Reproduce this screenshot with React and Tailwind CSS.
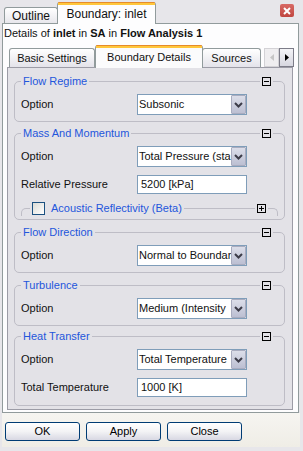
import React from 'react';

const PANEL = 'bg-[#e3e2e7]';

const BoxIcon = ({ plus }) => (
  <svg width="9" height="9" viewBox="0 0 9 9" className="block">
    <rect x="0.5" y="0.5" width="8" height="8" fill="none" stroke="#000" />
    <path d="M2 4.5h5" stroke="#000" />
    {plus && <path d="M4.5 2v5" stroke="#000" />}
  </svg>
);

const Chevron = () => (
  <svg width="9" height="6" viewBox="0 0 9 6" className="block">
    <path d="M1 1l3.5 3.5L8 1" fill="none" stroke="#3c3c48" strokeWidth="2" />
  </svg>
);

const Select = ({ value }) => (
  <div className="w-[110px] h-[21px] border border-[#7f9db9] bg-white flex">
    <div className="flex-1 overflow-hidden whitespace-nowrap pl-[1px] leading-[19px]">{value}</div>
    <div className="w-[15px] h-full border border-[#a9acbf] rounded-[1px] bg-gradient-to-b from-[#dcdee9] to-[#bcbfd2] flex items-center justify-center">
      <Chevron />
    </div>
  </div>
);

const TextField = ({ value }) => (
  <div className="w-[110px] h-[19px] border border-[#7f9db9] bg-white pl-[3px] leading-[17px] whitespace-nowrap">
    {value}
  </div>
);

const Row = ({ label, children, className = '' }) => (
  <div className={`flex items-center ${className}`}>
    <div className="w-[116px]">{label}</div>
    {children}
  </div>
);

const Group = ({ title, className = '', bodyClass = '', children }) => (
  <div className={`border border-[#bebdc6] rounded-[5px] ${className}`}>
    <div className="flex items-center h-[13px] -mt-[7px] pl-[6px] pr-[11px]">
      <span className={`${PANEL} px-[2px] leading-[13px] text-[#2356dc]`}>{title}</span>
      <span className="flex-1" />
      <span className={`${PANEL} px-[2px]`}>
        <BoxIcon />
      </span>
    </div>
    <div className={`px-[6px] pt-[6px] ${bodyClass}`}>{children}</div>
  </div>
);

const SubTab = ({ label, active, className = '' }) =>
  active ? (
    <div className={`relative z-10 -mb-[1px] h-[23px] border-x border-[#919b9c] rounded-t-[3px] bg-[#fbfbfc] flex flex-col ${className}`}>
      <div className="h-[1px] bg-[#e68b2c] rounded-t-[3px]" />
      <div className="h-[2px] bg-[#ffc73c]" />
      <div className="flex-1 flex items-center justify-center pb-[2px]">{label}</div>
    </div>
  ) : (
    <div className={`h-[19px] border-t border-x border-[#919b9c] rounded-t-[3px] bg-gradient-to-b from-white to-[#e4e3ea] flex items-center justify-center ${className}`}>
      {label}
    </div>
  );

const XpButton = ({ label }) => (
  <button className="w-[75px] h-[19px] border border-[#003c74] rounded-[3px] bg-gradient-to-b from-white via-[#f3f3f5] to-[#d8d8e3] leading-[17px] text-black">
    {label}
  </button>
);

export default function App() {
  return (
    <div className="w-[303px] h-[451px] bg-[#e7e6ea] flex flex-col text-[11px] text-[#111] font-['Liberation_Sans',Arial,sans-serif] overflow-hidden">
      {/* Top tabs */}
      <div className="h-[23px] flex items-end pl-[4px] shrink-0">
        <div className="w-[54px] h-[16px] border-t border-x border-[#919b9c] rounded-t-[3px] bg-gradient-to-b from-white to-[#e8e7ec] flex items-center justify-center text-[12px]">
          Outline
        </div>
        <div className="relative z-10 -mb-[1px] -ml-[1px] w-[99px] h-[22px] border-x border-[#919b9c] rounded-t-[3px] bg-[#fdfdfe] flex flex-col">
          <div className="h-[1px] bg-[#e68b2c] rounded-t-[3px]" />
          <div className="h-[2px] bg-[#ffc73c]" />
          <div className="flex-1 flex items-center justify-center text-[12px] pb-[1px]">Boundary: inlet</div>
        </div>
        <div className="ml-auto self-start mt-[4px] mr-[9px] w-[14px] h-[13px] rounded-[2px] bg-gradient-to-b from-[#d86a66] to-[#c0453f] flex items-center justify-center">
          <svg width="8" height="8" viewBox="0 0 8 8" className="block">
            <path d="M1 1l6 6M7 1L1 7" stroke="#fff" strokeWidth="2" />
          </svg>
        </div>
      </div>

      {/* Main panel */}
      <div className="ml-[2px] mr-[4px] border border-[#919b9c] bg-[#fdfdfe] flex flex-col shrink-0">
        <div className="h-[20px] pl-[1px] pt-[2px] leading-[14px] whitespace-nowrap">
          Details of <b>inlet</b> in <b>SA</b> in <b>Flow Analysis 1</b>
        </div>

        <div className="h-[23px] flex items-end pl-[6px]">
          <SubTab label="Basic Settings" className="w-[86px]" />
          <SubTab label="Boundary Details" active className="w-[108px]" />
          <SubTab label="Sources" className="w-[59px] -ml-[1px]" />
          <div className="ml-[3px] h-[19px] flex">
            <div className="w-[15px] h-full border border-[#d3d2d6] bg-[#efeef0] flex items-center justify-center">
              <svg width="4" height="7" viewBox="0 0 4 7"><path d="M4 0v7L0 3.5z" fill="#c6c6c6" /></svg>
            </div>
            <div className="w-[15px] h-full border border-[#7c7c88] bg-gradient-to-b from-[#f4f4f7] to-[#d7d7e0] flex items-center justify-center">
              <svg width="4" height="7" viewBox="0 0 4 7"><path d="M0 0v7l4-3.5z" fill="#000" /></svg>
            </div>
          </div>
        </div>

        <div className={`ml-[4px] mr-[5px] mb-[2px] border border-[#9c9ca6] ${PANEL} pl-[6px] pr-[7px] pt-[13px] pb-[3px]`}>
          <Group title="Flow Regime">
            <Row label="Option" className="pb-[6px]">
              <Select value="Subsonic" />
            </Row>
          </Group>

          <Group title="Mass And Momentum" className="mt-[11px]" bodyClass="pb-[3px]">
            <Row label="Option">
              <Select value="Total Pressure (sta" />
            </Row>
            <Row label="Relative Pressure" className="mt-[8px]">
              <TextField value="5200 [kPa]" />
            </Row>
            <div className="mt-[14px] h-[8px] border-t border-x border-[#bebdc6] rounded-t-[5px]">
              <div className="flex items-center h-[13px] -mt-[7px] pl-[8px] pr-[9px]">
                <span className={`${PANEL} px-[2px] flex items-center gap-[6px]`}>
                  <span className="block w-[13px] h-[13px] border border-[#1c5180] bg-gradient-to-br from-[#dcdcd6] to-white" />
                  <span className="text-[#2356dc] leading-[13px]">Acoustic Reflectivity (Beta)</span>
                </span>
                <span className="flex-1" />
                <span className={`${PANEL} px-[2px]`}>
                  <BoxIcon plus />
                </span>
              </div>
            </div>
          </Group>

          <Group title="Flow Direction" className="mt-[12px]">
            <Row label="Option" className="pb-[6px]">
              <Select value="Normal to Boundar" />
            </Row>
          </Group>

          <Group title="Turbulence" className="mt-[12px]">
            <Row label="Option" className="pb-[6px]">
              <Select value="Medium (Intensity" />
            </Row>
          </Group>

          <Group title="Heat Transfer" className="mt-[10px]" bodyClass="pb-[8px]">
            <Row label="Option">
              <Select value="Total Temperature" />
            </Row>
            <Row label="Total Temperature" className="mt-[8px]">
              <TextField value="1000 [K]" />
            </Row>
          </Group>
        </div>
      </div>

      {/* Bottom buttons */}
      <div className="flex-1 ml-[2px] mr-[3px] mb-[4px] bg-gradient-to-b from-[#f6f5f1] to-[#efede6] flex items-start gap-[6px] pl-[3px] pt-[9px]">
        <XpButton label="OK" />
        <XpButton label="Apply" />
        <XpButton label="Close" />
      </div>
    </div>
  );
}
